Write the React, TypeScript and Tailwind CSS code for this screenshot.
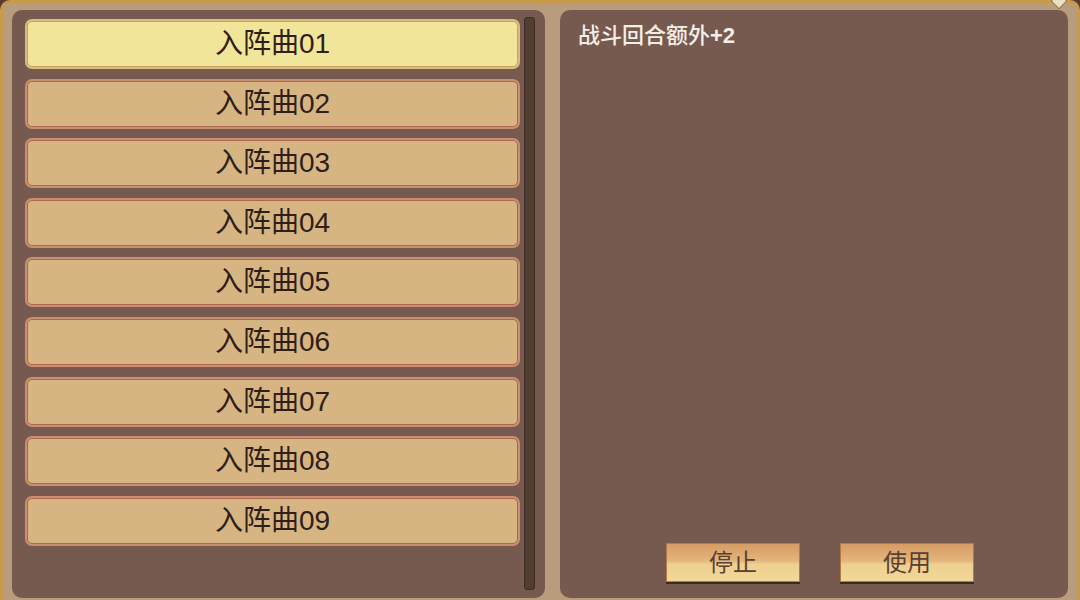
import React from 'react';

const songs = ['01', '02', '03', '04', '05', '06', '07', '08', '09'];

function SongItem({ label, active }: { label: string; active: boolean }) {
  return (
    <div
      className={`h-[50px] rounded-[7px] p-[2px] ${
        active ? 'bg-[#d9bd7e]' : 'bg-[#c98f70]'
      }`}
    >
      <div
        className={`flex h-full items-center justify-center rounded-[5px] border ${
          active ? 'border-[#c4a466] bg-[#f0e598]' : 'border-[#a9684f] bg-[#d7b583]'
        }`}
      >
        <span className="text-[28px] leading-none text-[#2e2018]">入阵曲{label}</span>
      </div>
    </div>
  );
}

function ActionButton({ label }: { label: string }) {
  return (
    <button className="relative h-[39px] w-[134px] border border-[#b3794d] bg-[linear-gradient(to_bottom,#d69c64_0%,#e3b57c_45%,#eed090_55%,#f2d898_100%)] pt-[4px] shadow-[0_2px_0_#3b2a22]">
      <span className="text-[24px] leading-none text-[#5a4030]">{label}</span>
    </button>
  );
}

export default function App() {
  return (
    <div
      className="h-[600px] w-[1080px] overflow-hidden bg-[#5a3a2c]"
      style={{ fontFamily: '"Liberation Sans", "Noto Sans CJK SC", sans-serif' }}
    >
      <div className="relative flex h-[606px] gap-[15px] rounded-t-[10px] border-[3px] border-b-0 border-[#c99a48] bg-[#b89c7c] pb-[8px] pl-[9px] pr-[9px] pt-[7px]">
        {/* corner ornament */}
        <div className="absolute right-[12px] top-[-8px] h-[12px] w-[12px] rotate-45 border border-[#8a6a3a] bg-[#ece0c0]" />

        {/* song list */}
        <div className="flex h-full w-[533px] gap-[4px] rounded-[10px] bg-[#765a4f] pl-[13px] pr-[10px] pt-[8px]">
          <div className="flex w-[495px] flex-col gap-[9.6px] pt-[1px]">
            {songs.map((s, i) => (
              <SongItem key={s} label={s} active={i === 0} />
            ))}
          </div>
          <div className="mb-[8px] mt-[-1px] w-[11px] rounded-[3px] border border-[#3e2c24] bg-[#523d33]" />
        </div>

        {/* details */}
        <div className="flex h-full w-[508px] flex-col rounded-[10px] bg-[#765a4f] pb-[16px] pl-[18px] pt-[11px]">
          <p className="text-[22px] font-medium leading-[30px] text-[#f4eee8]">
            战斗回合额外<span className="font-bold">+2</span>
          </p>
          <div className="mt-auto flex gap-[40px] pl-[88px]">
            <ActionButton label="停止" />
            <ActionButton label="使用" />
          </div>
        </div>
      </div>
    </div>
  );
}
